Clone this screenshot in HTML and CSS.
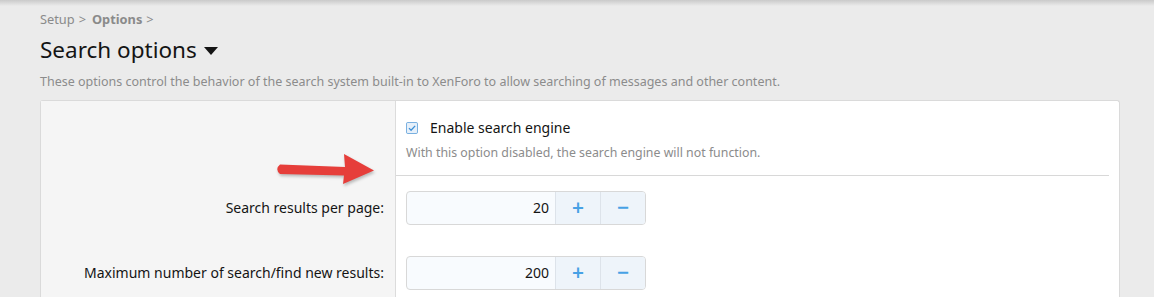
FILE: index.html
```html
<!DOCTYPE html>
<html lang="en">
<head>
    <meta charset="UTF-8">
    <title>Search options</title>
    <link rel="stylesheet" href="styles.css">
</head>
<body>

<div class="top-shadow"></div>

<div class="page">

    <!-- Breadcrumb -->
    <ul class="crumbs">
        <li>Setup<span class="sep">&gt;</span></li>
        <li class="current">Options<span class="sep">&gt;</span></li>
    </ul>

    <!-- Title -->
    <h1 class="page-title">Search options <span class="caret"></span></h1>
    <p class="page-desc">These options control the behavior of the search system built-in to XenForo to allow searching of messages and other content.</p>

    <!-- Options block -->
    <div class="block">

        <div class="form-row">
            <div class="form-label"></div>
            <div class="form-value first">
                <label class="check">
                    <svg class="check-box" width="12" height="12" viewBox="0 0 13 13">
                        <rect x="0.5" y="0.5" width="12" height="12" rx="1.5" fill="#e6f0fa" stroke="#6aa7dc"/>
                        <path d="M3.2 6.6 L5.5 8.9 L9.9 4.2" fill="none" stroke="#3d8fd6" stroke-width="1.4"/>
                    </svg>
                    Enable search engine
                </label>
                <p class="hint">With this option disabled, the search engine will not function.</p>
            </div>
        </div>

        <div class="form-row">
            <div class="form-label">Search results per page:</div>
            <div class="form-value">
                <div class="spinbox">
                    <span class="spin-input">20</span>
                    <span class="spin-btn">+</span>
                    <span class="spin-btn">&minus;</span>
                </div>
            </div>
        </div>

        <div class="form-row">
            <div class="form-label">Maximum number of search/find new results:</div>
            <div class="form-value">
                <div class="spinbox">
                    <span class="spin-input">200</span>
                    <span class="spin-btn">+</span>
                    <span class="spin-btn">&minus;</span>
                </div>
            </div>
        </div>

        <!-- annotation arrow -->
        <svg class="arrow" width="110" height="40" viewBox="0 0 110 40">
            <path d="M7 13.5 L72 16 L71 3 L101 19.5 L70 33 L71 24.5 L7 23 Q1.5 18 7 13.5 Z" fill="#e63e3a"/>
        </svg>
    </div>

</div>

</body>
</html>
```

FILE: styles.css
```css
/* General */
* {
    margin: 0;
    padding: 0;
    box-sizing: border-box;
}

body {
    background: #ebebeb;
    font-family: "Noto Sans", "Open Sans", sans-serif;
    color: #141414;
    overflow: hidden;
}

.top-shadow {
    height: 6px;
    background: linear-gradient(#cacaca, #ebebeb);
}

.page {
    padding: 0 35px 0 40px;
}

/* Breadcrumb */
.crumbs {
    list-style: none;
    display: flex;
    gap: 6px;
    font-size: 12.8px;
    color: #8a8a8a;
    margin-top: 4px;
    height: 18px;
}

.crumbs .current {
    font-weight: bold;
}

.crumbs .sep {
    font-weight: normal;
    margin-left: 4px;
}

/* Title */
.page-title {
    font-size: 22.5px;
    font-weight: normal;
    margin-top: 7px;
    line-height: 30px;
    display: flex;
    align-items: center;
}

.caret {
    display: inline-block;
    margin-left: 7px;
    margin-top: 2px;
    border-left: 7px solid transparent;
    border-right: 7px solid transparent;
    border-top: 8px solid #141414;
}

.page-desc {
    font-size: 12.5px;
    color: #8c8c8c;
    margin-top: 8px;
    line-height: 18px;
}

/* Block */
.block {
    position: relative;
    margin-top: 9px;
    width: 1080px;
    background: #fff;
    border: 1px solid #dadada;
    border-bottom: none;
    border-radius: 3px 3px 0 0;
}

.form-row {
    display: grid;
    grid-template-columns: 355px 1fr;
}

.form-label {
    background: #f5f5f5;
    border-right: 1px solid #dcdcdc;
    text-align: right;
    padding: 15px 11px 16px 10px;
    font-size: 14px;
    line-height: 34px;
}

.form-value {
    padding: 15px 10px 16px 10px;
}

.form-value.first {
    padding: 17px 0 13px 10px;
    margin-right: 10px;
    border-bottom: 1px solid #d8d8d8;
}

.check {
    display: flex;
    align-items: center;
    gap: 12px;
    font-size: 14px;
    line-height: 20px;
}

.check-box {
    flex-shrink: 0;
}

.hint {
    font-size: 12.35px;
    color: #8c8c8c;
    margin-top: 6px;
    line-height: 18px;
}

/* Number spin box */
.spinbox {
    display: flex;
    width: 240px;
    height: 34px;
    border: 1px solid #d8d8d8;
    border-radius: 4px;
    overflow: hidden;
    background: #f8fbfe;
}

.spin-input {
    flex: 1;
    text-align: right;
    padding-right: 6px;
    font-size: 14px;
    line-height: 32px;
}

.spin-btn {
    width: 45px;
    text-align: center;
    background: #eef4fa;
    border-left: 1px solid #dde3ea;
    color: #47a1e5;
    font-size: 21px;
    font-weight: 600;
    line-height: 31px;
}

/* Annotation */
.arrow {
    position: absolute;
    left: 232px;
    top: 50px;
    filter: drop-shadow(1px 2px 1.5px rgba(0, 0, 0, 0.25));
}
```
